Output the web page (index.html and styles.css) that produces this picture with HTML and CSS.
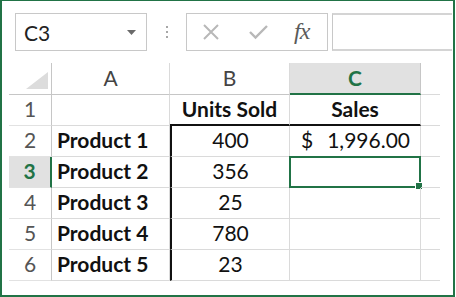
FILE: index.html
```html
<!DOCTYPE html>
<html>
<head>
<meta charset="utf-8">
<link rel="stylesheet" href="styles.css">
</head>
<body>
<div class="frame">
  <div class="toolbar">
    <div class="namebox">
      <span class="ref">C3</span>
      <svg class="caret" width="9" height="5" viewBox="0 0 9 5"><path d="M0 0H9L4.5 5Z" fill="#6a6a6a"/></svg>
    </div>
    <div class="dots"><i></i><i></i><i></i></div>
    <div class="buttons">
      <svg class="ico" width="18" height="18" viewBox="0 0 18 18"><path d="M2 2L16 16M16 2L2 16" stroke="#b8b8b8" stroke-width="2" fill="none"/></svg>
      <svg class="ico chk" width="21" height="16" viewBox="0 0 21 16"><path d="M2 8L7.5 13.5L19 2" stroke="#b8b8b8" stroke-width="2.4" fill="none"/></svg>
      <span class="fx">fx</span>
    </div>
    <div class="formula"></div>
  </div>

  <div class="sheet">
    <div class="c corner"><svg width="22" height="17" viewBox="0 0 22 17"><path d="M22 0V17H0Z" fill="#dcdcdc"/></svg></div>
    <div class="c ch">A</div>
    <div class="c ch">B</div>
    <div class="c ch sel">C</div>
    <div class="c ch last"></div>

    <div class="c rh">1</div>
    <div class="c"></div>
    <div class="c b bold top-b">Units Sold</div>
    <div class="c b bold top-b">Sales</div>
    <div class="c last"></div>

    <div class="c rh">2</div>
    <div class="c bold">Product 1</div>
    <div class="c b colb">400</div>
    <div class="c money"><span>$</span><span>1,996.00</span></div>
    <div class="c last"></div>

    <div class="c rh rsel">3</div>
    <div class="c bold">Product 2</div>
    <div class="c b colb">356</div>
    <div class="c active"><i class="handle"></i></div>
    <div class="c last"></div>

    <div class="c rh">4</div>
    <div class="c bold">Product 3</div>
    <div class="c b colb">25</div>
    <div class="c"></div>
    <div class="c last"></div>

    <div class="c rh">5</div>
    <div class="c bold">Product 4</div>
    <div class="c b colb">780</div>
    <div class="c"></div>
    <div class="c last"></div>

    <div class="c rh">6</div>
    <div class="c bold">Product 5</div>
    <div class="c b colb">23</div>
    <div class="c"></div>
    <div class="c last"></div>
  </div>
</div>
</body>
</html>
```

FILE: styles.css
```css
* { box-sizing: border-box; }
html, body { margin: 0; padding: 0; background: #fff; }
body { font-family: Lato, "Open Sans", sans-serif; color: #111; }

.frame {
  width: 455px;
  height: 297px;
  border: 2px solid #217346;
  border-top-width: 1px;
  background: #fff;
  overflow: hidden;
}

.toolbar {
  display: flex;
  align-items: center;
  height: 38px;
  margin: 12px 0 0 13px;
}
.namebox {
  width: 132px;
  height: 38px;
  border: 1px solid #c8c8c8;
  display: flex;
  align-items: center;
  justify-content: space-between;
  padding: 0 10px 0 8px;
}
.ref { font-size: 21px; color: #222; }
.caret { margin-top: 1px; }
.dots {
  width: 39px;
  display: flex;
  flex-direction: column;
  align-items: center;
  gap: 3px;
}
.dots i { width: 2px; height: 2px; background: #8a8a8a; border-radius: 1px; display: block; }
.buttons {
  width: 142px;
  height: 38px;
  border: 1px solid #c8c8c8;
  display: flex;
  align-items: center;
  padding-left: 15px;
}
.buttons .chk { margin-left: 28px; }
.fx {
  margin-left: 25px;
  font-family: "Liberation Serif", serif;
  font-style: italic;
  font-size: 24px;
  color: #5a5a5a;
  letter-spacing: -1px;
  margin-top: -2px;
}
.formula {
  margin-left: 4px;
  width: 120px;
  height: 38px;
  border-top: 2px solid #d4d4d4;
  border-bottom: 2px solid #d4d4d4;
  border-left: 1px solid #c8c8c8;
}

.sheet {
  margin: 12px 0 0 7px;
  display: grid;
  grid-template-columns: 43px 118px 120px 131px 19px;
  grid-template-rows: 32px repeat(6, 31px);
  font-size: 21px;
}
.c {
  border-right: 1px solid #dadada;
  border-bottom: 1px solid #dadada;
  display: flex;
  align-items: flex-end;
  padding: 0 5px 4px;
  white-space: nowrap;
  position: relative;
  line-height: 24px;
}
.last { border-right: none; }
.corner {
  border-right: 1px solid #c6c6c6;
  border-bottom: 1px solid #c6c6c6;
  justify-content: flex-end;
  padding: 0 3px 5px 0;
}
.ch {
  justify-content: center;
  color: #444;
  border-bottom: 1px solid #c6c6c6;
}
.ch.last { border-bottom: 1px solid #dadada; }
.ch.sel {
  background: #e1e1e1;
  color: #217346;
  font-weight: bold;
  border-bottom: 2px solid #217346;
  border-right: 1px solid #c6c6c6;
  padding-bottom: 3px;
}
.rh {
  justify-content: center;
  color: #555;
  border-right: 1px solid #c6c6c6;
  border-bottom: 1px solid #e2e2e2;
}
.rh.rsel {
  background: #e1e1e1;
  color: #217346;
  font-weight: bold;
  border-right: 2px solid #217346;
}
.bold { font-weight: bold; }
.b { justify-content: center; }
.top-b { border-bottom: 2px solid #111; padding-bottom: 3px; }
.colb { border-left: 2px solid #111; }
.money { justify-content: space-between; padding: 0 10px 4px 11px; }
.active {
  border: 2px solid #217346;
  margin: -1px 0 0 -1px;
}
.handle {
  position: absolute;
  right: -4px;
  bottom: -4px;
  width: 6px;
  height: 6px;
  background: #217346;
  border: 1px solid #fff;
  box-sizing: content-box;
}
```
